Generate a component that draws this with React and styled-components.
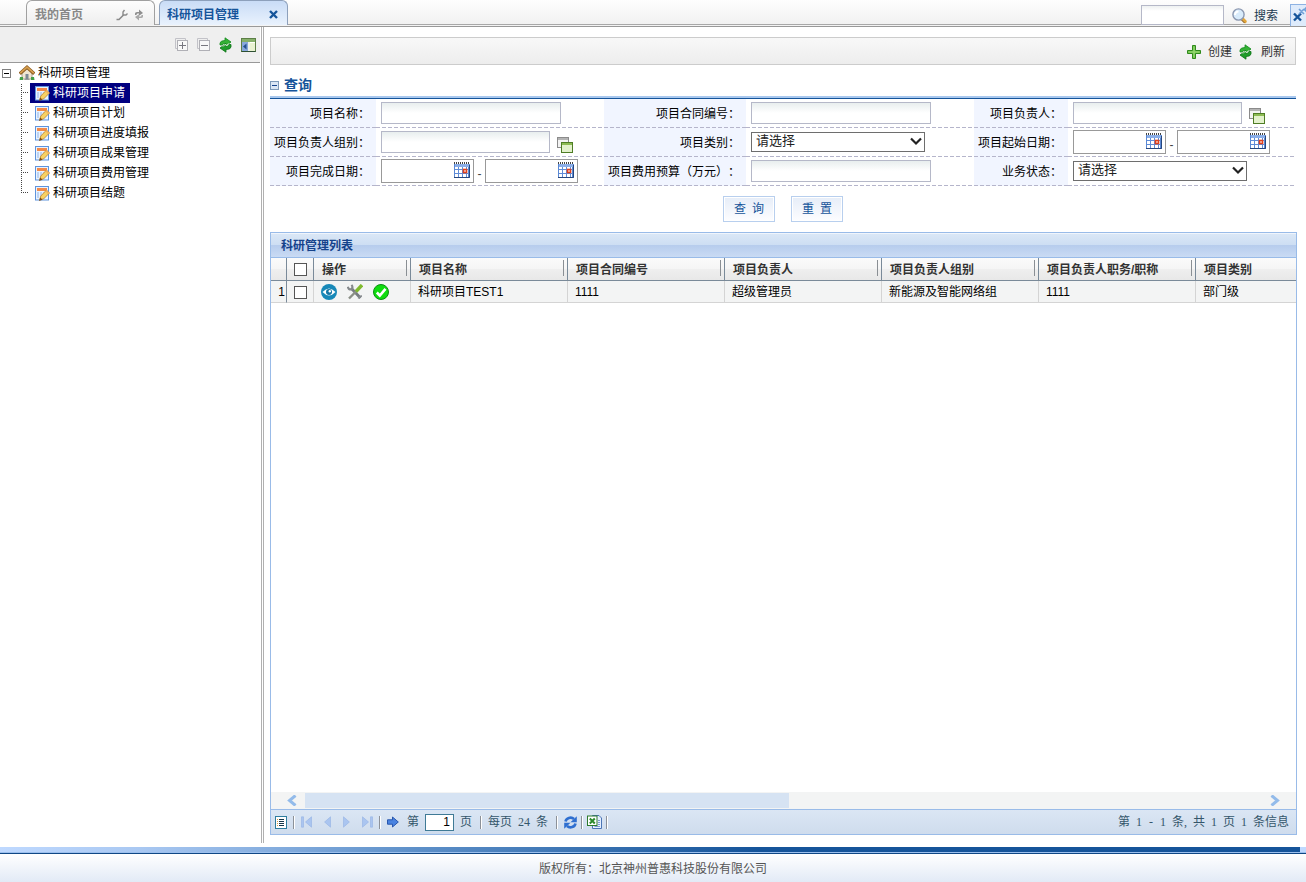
import styled, { createGlobalStyle, css } from 'styled-components';

const SANS = '"Liberation Sans", "Noto Sans CJK SC", sans-serif';
const SERIF = '"Liberation Serif", "Noto Sans CJK SC", serif';

const GlobalStyle = createGlobalStyle`
  * {
    box-sizing: border-box;
  }

  body {
    margin: 0;
    font: 12px/20px ${SANS};
    text-spacing-trim: space-all;
    color: #000;
    background: #fff;
  }

  input,
  select,
  button {
    font: inherit;
    color: inherit;
    margin: 0;
  }

  button {
    display: inline-flex;
    align-items: center;
    padding: 0;
    border: 0;
    background: none;
    cursor: pointer;
  }

  svg {
    display: block;
    flex-shrink: 0;
  }
`;

const Page = styled.div`
  display: flex;
  flex-direction: column;
  height: 100vh;
  overflow: hidden;
`;

/* ---------- top tabs ---------- */

const TopBar = styled.header`
  display: flex;
  align-items: flex-start;
  justify-content: space-between;
  flex-shrink: 0;
  height: 27px;
  padding-left: 26px;
  border-bottom: 1px solid #999;
  background: linear-gradient(#fefefe 0, #f2f2f2 24px, #a8a8a8 24px, #a8a8a8 25px, #f4f4f4 25px);
`;

const Tabs = styled.nav`
  display: flex;
  gap: 4px;
`;

const Tab = styled.div`
  display: flex;
  align-items: center;
  width: 129px;
  height: 25px;
  padding: 3px ${({ $active }) => ($active ? '9px' : '10px')} 0 ${({ $active }) => ($active ? '7px' : '8px')};
  border: 1px solid ${({ $active }) => ($active ? '#8da0bb' : '#a0a0a0')};
  border-bottom: 0;
  border-radius: 6px 6px 0 0;
  color: ${({ $active }) => ($active ? '#15549a' : '#888')};
  background: ${({ $active }) =>
    $active ? 'linear-gradient(#c9dcf6, #e9f2fd)' : 'linear-gradient(#fdfdfd, #eee)'};
`;

const TabLabel = styled.button`
  flex: 1;
  font-weight: bold;
`;

const TabTools = styled.span`
  display: flex;
  align-items: center;
  gap: 6px;
`;

const SearchArea = styled.form`
  display: flex;
  align-items: center;
  padding-top: 3px;
`;

const SearchInput = styled.input`
  width: 83px;
  height: 20px;
  border: 1px solid #b5b8c8;
  background: linear-gradient(#eef1f1, #fff 5px);
`;

const SearchButton = styled.button`
  gap: 7px;
  margin: 3px 12px 0 8px;
  color: #1d3c52;
`;

const CloseAll = styled.button`
  width: 16px;
  height: 22px;
  padding: 0 0 0 2px;
  overflow: hidden;
  border: 1px solid #8db2e3;
  border-width: 1px 0 0 1px;
  background: #deebfb;
`;

/* ---------- body ---------- */

const Body = styled.div`
  display: flex;
  flex: 1;
  min-height: 0;
`;

const Sidebar = styled.aside`
  flex: 0 0 260px;
`;

const SideTools = styled.div`
  display: flex;
  align-items: center;
  justify-content: flex-end;
  gap: 9px;
  height: 36px;
  padding-right: 4px;
  border-bottom: 1px solid #999;
  background: #efefef;
`;

const Splitter = styled.div`
  flex: 0 0 3px;
  margin-left: 1px;
  border: 1px solid #b0b0b0;
  border-width: 0 1px;
`;

const Root = styled.div`
  display: flex;
  align-items: center;
  gap: 3px;
  height: 20px;
  padding-left: 2px;
`;

const Toggle = styled.button`
  margin-right: 5px;
`;

const Children = styled.ul`
  margin: 0 0 0 21px;
  padding: 0;
  list-style: none;
`;

const Child = styled.li`
  position: relative;
  height: 20px;
  padding-left: 9px;

  &::before {
    content: '';
    position: absolute;
    left: 0;
    top: 1px;
    bottom: 0;
    width: 1px;
    background: repeating-linear-gradient(#444 0 1px, transparent 1px 2px);
  }

  &::after {
    content: '';
    position: absolute;
    left: 0;
    top: 9px;
    width: 7px;
    height: 1px;
    background: repeating-linear-gradient(90deg, #444 0 1px, transparent 1px 2px);
  }

  &:last-child::before {
    bottom: 10px;
  }
`;

const Leaf = styled.a`
  display: inline-flex;
  align-items: center;
  gap: 3px;
  height: 20px;
  padding: 0 5px;
  text-decoration: none;
  color: ${({ $selected }) => ($selected ? '#fff' : '#000')};
  background: ${({ $selected }) => ($selected ? '#000080' : 'transparent')};
`;

const Main = styled.main`
  display: flex;
  flex-direction: column;
  flex: 1;
  min-width: 0;
  padding: 10px 9px 8px 6px;
`;

const ActionBar = styled.div`
  display: flex;
  align-items: center;
  justify-content: flex-end;
  gap: 7px;
  flex-shrink: 0;
  height: 28px;
  margin-right: 1px;
  padding: 2px 10px 0 0;
  border: 1px solid #ccc;
  background: linear-gradient(#f8f8f8, #ededed);
`;

const ActionButton = styled.button`
  gap: ${({ $gap }) => $gap};
  color: #333;
`;

/* ---------- query form ---------- */

const QueryHead = styled.h2`
  display: flex;
  align-items: center;
  gap: 5px;
  height: 34px;
  margin: 0 1px 0 0;
  padding-top: 7px;
  border-bottom: 1px solid #15549a;
  box-shadow: inset 0 -2px #a9c8ee;
  font-size: 14px;
  color: #15549a;
`;

const QueryForm = styled.form`
  margin-right: 1px;
`;

const QueryGrid = styled.div`
  display: grid;
  grid-template-columns: 106px 1fr 142px 1fr 94px 1fr;
`;

const dashed = css`
  background-image: repeating-linear-gradient(90deg, #b5b5cb 0 4px, transparent 4px 6px);
  background-size: 100% 1px;
  background-position: bottom;
  background-repeat: no-repeat;
`;

const FieldLabel = styled.label`
  height: 29px;
  padding-right: 6px;
  line-height: 30px;
  text-align: right;
  white-space: nowrap;
  background-color: #f1f5ff;
  ${dashed}
`;

const Field = styled.div`
  display: flex;
  align-items: center;
  height: 29px;
  padding: 0 0 1px 5px;
  ${dashed}
`;

const TextInput = styled.input`
  width: ${({ $picker }) => ($picker ? '169px' : '180px')};
  height: 22px;
  border: 1px solid #b5b8c8;
  background: linear-gradient(#e8eeee, #fff 10px);
`;

const PickButton = styled.button`
  margin: 5px 0 0 7px;
`;

const SelectBox = styled.span`
  position: relative;
  width: 174px;
  height: 20px;

  select {
    appearance: none;
    display: block;
    width: 100%;
    height: 20px;
    padding: 0 20px 2px 4px;
    border: 1px solid #6e6e6e;
    border-radius: 0;
    background: #fff;
    font-size: 13px;
    line-height: 16px;
    color: #222;
  }

  svg {
    position: absolute;
    right: 3px;
    top: 5px;
    pointer-events: none;
  }
`;

const DateBox = styled.span`
  position: relative;
  width: 93px;
  height: 24px;

  input {
    display: block;
    width: 100%;
    height: 100%;
    border: 1px solid #999;
    background: #fff;
  }

  button {
    position: absolute;
    right: 4px;
    top: 3px;
  }
`;

const Dash = styled.span`
  width: 11px;
  padding-top: 6px;
  text-align: center;
  color: #444;
`;

const FormButtons = styled.div`
  display: flex;
  justify-content: center;
  gap: 16px;
  padding: 10px 0;
`;

const FormButton = styled.button`
  justify-content: center;
  gap: 6px;
  width: 52px;
  height: 26px;
  border: 1px solid #b8cfee;
  box-shadow: inset 0 0 0 1px #fff;
  color: #15549a;
  background: linear-gradient(#e6edf8, #fdfdff);
`;

/* ---------- list ---------- */

const Panel = styled.section`
  display: flex;
  flex-direction: column;
  flex: 1;
  min-height: 0;
  border: 1px solid #99bbe8;
`;

const PanelTitle = styled.h3`
  height: 25px;
  margin: 0;
  padding-left: 10px;
  border-top: 1px solid #f0f5fc;
  border-bottom: 1px solid #99bbe8;
  font-size: 12px;
  line-height: 24px;
  color: #15428b;
  background: linear-gradient(#dae7f6 0, #cddef3 11px, #b6cced 11px, #cbdcf4 24px);
`;

const GridBody = styled.div`
  flex: 1;
  min-height: 0;
  overflow: hidden;
`;

const Table = styled.table`
  width: 1082px;
  min-width: 100%;
  table-layout: fixed;
  border-collapse: separate;
  border-spacing: 0;
`;

const Th = styled.th`
  position: relative;
  height: 23px;
  padding: ${({ $tight }) => ($tight ? '0 0 0 7px' : '2px 0 0 8px')};
  border-right: 1px solid #7a8a99;
  border-bottom: 1px solid #7a8a99;
  line-height: 20px;
  text-align: left;
  color: #333;
  background: linear-gradient(#fbfbfb, #f5f5f5 11px, #efefef 11px, #e8e8e8);

  ${({ $sized }) =>
    $sized &&
    css`
      &::after {
        content: '';
        position: absolute;
        right: 3px;
        top: 2px;
        height: 16px;
        border-right: 1px solid #8a8f94;
      }
    `}
`;

const Td = styled.td`
  height: 22px;
  padding: 1px 0 0 7px;
  border-right: 1px solid ${({ $dark }) => ($dark ? '#7a8a99' : '#d4d4d4')};
  border-bottom: 1px solid #d4d4d4;
  line-height: 20px;
  background: #f3f4f4;
`;

const NumberCell = styled(Td)`
  padding: 1px 1px 0 0;
  text-align: right;
`;

const Check = styled.input`
  appearance: none;
  display: block;
  width: 13px;
  height: 13px;
  border: 1px solid #555;
  background: #fff;
`;

const RowActions = styled.div`
  display: flex;
  gap: 10px;
`;

const ScrollTrack = styled.div`
  display: flex;
  align-items: center;
  flex-shrink: 0;
  gap: 1px;
  height: 17px;
  padding: 0 16px;
  background: #f3f4f4;
`;

const ScrollLane = styled.div`
  display: grid;
  grid-template-columns: 51fr 50fr;
  flex: 1;
  margin: 0 5px 0 7px;
`;

const ScrollThumb = styled.div`
  height: 15px;
  background: #d6e3f3;
`;

const Pager = styled.footer`
  display: flex;
  align-items: center;
  flex-shrink: 0;
  gap: 6px;
  height: 25px;
  padding: 0 7px 0 4px;
  border-top: 1px solid #99bbe8;
  font-family: ${SERIF};
  color: #34566b;
  background: linear-gradient(#dbe6f4, #cfdced);
`;

const PagerGroup = styled.div`
  display: flex;
  align-items: center;
  gap: ${({ $gap }) => $gap};
`;

const PagerLine = styled.span`
  width: 2px;
  height: 13px;
  border-left: 1px solid #8c9199;
  border-right: 1px solid #fff;
`;

const PageInput = styled.input`
  width: 29px;
  height: 17px;
  padding: 0 3px;
  border: 1px solid #3f7a96;
  font-family: ${SANS};
  text-align: right;
  color: #000;
  background: #fff;
`;

const PagerSummary = styled(PagerGroup)`
  margin-left: auto;

  span {
    min-width: 6px;
    text-align: center;
  }
`;

/* ---------- bottom ---------- */

const BottomBar = styled.div`
  flex-shrink: 0;
  height: 7px;
  margin-top: 4px;
  border-bottom: 1px solid #0f4785;
  box-shadow: inset 0 -1px #9cc0ee;
  background: linear-gradient(
    90deg,
    #bfd9ff,
    #a9c8f2 140px,
    #5c8fc8 420px,
    #15549a 760px,
    #15549a calc(100% - 6px),
    #bfd9ff calc(100% - 6px)
  );
`;

const Copyright = styled.footer`
  flex-shrink: 0;
  height: 28px;
  line-height: 30px;
  text-align: center;
  color: #555;
  background: linear-gradient(#fff, #e2eaf6);
`;

/* ---------- icons ---------- */

const WrenchIcon = () => (
  <svg width="12" height="12" viewBox="0 0 12 12" fill="none" stroke="#8a8a8a">
    <path d="M.5 10.500H3L7.500 6" strokeWidth="1.600" />
    <path d="M8.500 1 7 3v3h3l1.500-1.500" strokeWidth="1.400" />
  </svg>
);

const SmallRefreshIcon = () => (
  <svg width="10" height="12" viewBox="0 0 10 12" fill="#8f8f8f">
    <path d="M1 6V4.500Q1 3 3 3h2V.5L9 4 5 6.800V4.500H3.500Q2.500 4.500 2.500 6z" />
    <path d="M9 6v1.500Q9 9 7 9H5v2.500L1 8l4-2.800V7.500h1.500Q7.500 7.500 7.500 6z" opacity=".75" />
  </svg>
);

const CloseIcon = () => (
  <svg width="9" height="9" viewBox="0 0 9 9" stroke="#15549a" strokeWidth="2.400">
    <path d="M1 1l7 7M8 1 1 8" />
  </svg>
);

const CloseAllIcon = () => (
  <svg width="14" height="18" viewBox="0 0 14 18" fill="none">
    <path d="M1 7.500l7 7M8 7.500l-7 7" stroke="#15549a" strokeWidth="2.400" />
    <path d="M6 3l5 5M11 3 6 8M11 3l3 3M14 1l-3 3" stroke="#6f9fd8" strokeWidth="1.600" />
  </svg>
);

const SearchIcon = () => (
  <svg width="15" height="16" viewBox="0 0 15 16">
    <path d="M10 10.500 13 13.500" stroke="#e2a63a" strokeWidth="3.400" strokeLinecap="round" />
    <path d="M9.500 12 12.500 15" stroke="#7a5a3a" />
    <circle cx="6.500" cy="6.500" r="5.600" fill="#d8ebfb" stroke="#8a97b0" strokeWidth="1.400" />
    <path d="M3 7a3.500 3.500 0 0 1 3.500-3.500" fill="none" stroke="#fff" strokeWidth="2" />
  </svg>
);

const StackIcon = ({ plus }) => (
  <svg width="13" height="13" viewBox="0 0 13 13" fill="none" stroke="#b0b0b6">
    <path d="M2 10.500H.5V.5h10V2" stroke="#c2c2c8" />
    <rect x="2.500" y="2.500" width="10" height="10" fill="#f8f8f8" />
    <path d={plus ? 'M4 7.500h7M7.500 4v7' : 'M4 7.500h7'} stroke="#77777f" />
  </svg>
);

const RefreshIcon = () => (
  <svg width="13" height="16" viewBox="0 0 13 16">
    <path d="M1 8V6Q1.500 3.500 6 3.500V.8L12 5 6 9.500V6.500Q4 6.500 3 8z" fill="#35b135" stroke="#128a1c" strokeWidth=".8" />
    <path d="M12 7.500v2.500Q11.500 12.500 7 12.500v2.700L1 11 7 6.500v3Q9 9.500 10 7.500z" fill="#1f9c2a" stroke="#0c7215" strokeWidth=".8" />
    <path d="M4 9.500 6.500 7l1 2L9.500 6.500" fill="none" stroke="#d7f0d4" />
  </svg>
);

const CollapseIcon = () => (
  <svg width="15" height="14" viewBox="0 0 15 14">
    <rect x=".5" y=".5" width="14" height="13" fill="#fff" stroke="#5c7f46" />
    <path d="M1 1h13v3H1z" fill="#86b06a" />
    <path d="M1 4h6v9H1z" fill="#88a8dc" />
    <path d="M7 4h2v9H7z" fill="#eef3e8" />
    <path d="M9 5h5v8H9z" fill="#e9f2d2" />
    <path d="M5.500 5.500v6L2 8.500z" fill="#24508f" />
    <path d="M.5 13.500h14" stroke="#2d4f33" />
  </svg>
);

const MinusBox = ({ blue }) => (
  <svg width="9" height="9" viewBox="0 0 9 9" fill="none">
    <rect x=".5" y=".5" width="8" height="8" fill={blue ? '#dbe6f4' : '#fff'} stroke={blue ? '#7f9ab8' : '#808080'} />
    <path d="M2 4.500h5" stroke={blue ? '#15428b' : '#000'} />
  </svg>
);

const HomeIcon = () => (
  <svg width="16" height="16" viewBox="0 0 16 16">
    <path d="M3 7.500 8 3l5 4.500V14H3z" fill="#f0e6d2" stroke="#9a8f7d" strokeWidth=".8" />
    <path d="M6.500 9h3v5h-3z" fill="#7c8894" />
    <path d="M.8 8.800 8 2.200 15.200 8.800" fill="none" stroke="#8a5a20" strokeWidth="3.200" />
    <path d="M1.200 8.200 8 2.100 14.800 8.200" fill="none" stroke="#d9a150" strokeWidth="1.600" />
    <path d="M1 12h3v3H.5zM12 12h3l.5 3H12z" fill="#43a047" />
    <path d="M5.500 14.500h5" stroke="#999" />
  </svg>
);

const NoteIcon = () => (
  <svg width="15" height="15" viewBox="0 0 15 15">
    <rect x=".5" y=".5" width="13" height="13.500" fill="#eaf3fe" stroke="#5f93dc" />
    <path d="M2 2h10v3H2z" fill="#f28a4a" />
    <path d="M2 7h10M2 9h8M2 11h6" stroke="#8fb3e8" strokeWidth="1.200" strokeDasharray="2 1" />
    <path d="M4.800 13.500 5.800 10 11.500 4 14.500 7 8.500 13z" fill="#f8d262" stroke="#b9812b" strokeWidth=".8" />
    <path d="M11.500 4 14.500 7 13.300 8.200 10.300 5.200z" fill="#f0b060" />
    <path d="M4 15 5.200 11.500 7.500 13.800z" fill="#7c4a12" />
  </svg>
);

const PlusIcon = () => (
  <svg width="14" height="14" viewBox="0 0 14 14">
    <path d="M5.500 .5h3v5h5v3h-5v5h-3v-5h-5v-3h5z" fill="#6cc04a" stroke="#2f8a1c" />
    <path d="M7 1.500v11M1.500 7h11" stroke="#9ddb76" />
  </svg>
);

const WindowsIcon = () => (
  <svg width="16" height="16" viewBox="0 0 16 16">
    <rect x=".5" y=".5" width="11" height="10" fill="#f3f3f3" stroke="#8b8b8b" />
    <path d="M1 1h10v2H1z" fill="#b4b4b4" />
    <rect x="4.500" y="5.500" width="11" height="10" fill="#e3f1cc" stroke="#4f7d25" />
    <path d="M5 6h10v2H5z" fill="#8dbb54" />
  </svg>
);

const CalendarIcon = () => (
  <svg width="16" height="16" viewBox="0 0 16 16">
    <path d="M0 2h16v14H0z" fill="#5a88d4" />
    <path d="M1 2h14v3H1z" fill="#8aaee8" />
    <path d="M0 1h16" stroke="#444" strokeWidth="2" strokeDasharray="1 1" />
    <path d="M1 5h13v10H1z" fill="#fff" />
    <path d="M1 7.500h13M1 11.500h13M4.500 5v10M8.500 5v10M12.500 5v10" stroke="#5f8cd8" />
    <rect x="9.500" y="7.500" width="3" height="3" fill="#fff" stroke="#e0401c" strokeWidth="1.600" />
    <path d="M0 15.500h15.500V3" fill="none" stroke="#27477e" />
  </svg>
);

const ChevronIcon = () => (
  <svg width="12" height="9" viewBox="0 0 12 9" fill="none" stroke="#222" strokeWidth="2.200">
    <path d="M1 1.500l5 5 5-5" />
  </svg>
);

const EyeIcon = () => (
  <svg width="16" height="16" viewBox="0 0 16 16">
    <circle cx="8" cy="8" r="8" fill="#1788b8" />
    <path d="M1.500 8Q8 .8 14.500 8 8 15 1.500 8z" fill="#fff" />
    <circle cx="8" cy="8" r="3" fill="#1576a5" />
    <circle cx="8.800" cy="7.200" r="1.200" fill="#fff" />
  </svg>
);

const ToolsIcon = () => (
  <svg width="16" height="16" viewBox="0 0 16 16" fill="none">
    <path d="M4 4 13.500 14" stroke="#777c80" strokeWidth="2.800" />
    <path d="M.8 2.800Q1.500 6 4.500 5.500 6.500 3.500 4.500.8" stroke="#85898c" strokeWidth="2" />
    <path d="M2 14.500 10 6.500" stroke="#8a8f86" strokeWidth="2.400" />
    <path d="M15 1 9 7.500" stroke="#7fba2e" strokeWidth="3.400" />
    <path d="M11.500 14.500Q12 12 15 12" stroke="#85898c" strokeWidth="1.600" />
  </svg>
);

const OkIcon = () => (
  <svg width="16" height="16" viewBox="0 0 16 16">
    <circle cx="8" cy="8" r="7.500" fill="#0fdc0f" stroke="#0a8f12" />
    <path d="M3.800 8.500 6.800 11.500 12.500 4.800" fill="none" stroke="#fff" strokeWidth="2.600" />
  </svg>
);

const ScrollArrow = ({ right }) => (
  <svg width="10" height="11" viewBox="0 0 10 11" fill="none" stroke="#93bbea" strokeWidth="3">
    <path d={right ? 'M1.500 .5l6 5-6 5' : 'M8.500 .5l-6 5 6 5'} />
  </svg>
);

const ListIcon = () => (
  <svg width="12" height="13" viewBox="0 0 12 13">
    <rect x=".5" y=".5" width="11" height="12" fill="#fff" stroke="#2f7d9f" />
    <path d="M4 3.500h5M4 5.500h5M4 7.500h5M4 9.500h5" stroke="#17364a" />
    <path d="M2.500 3v7" stroke="#e09b3c" strokeDasharray="1 1" />
  </svg>
);

const PageIcon = ({ kind }) => {
  const wide = kind === 'first' || kind === 'last';
  const flip = kind === 'next' || kind === 'last';
  const width = wide ? 11 : 7;
  return (
    <svg width={width} height="12" viewBox={`0 0 ${width} 12`} fill="#aac5f0" stroke="#93b2e4" strokeWidth=".6">
      <g transform={flip ? `translate(${width} 0) scale(-1 1)` : undefined}>
        {wide && <path d="M.5.8h2v10.400h-2z" />}
        <path d={wide ? 'M10.500 .8v10.400L4.500 6z' : 'M6.500 .8v10.400L.6 6z'} />
      </g>
    </svg>
  );
};

const GoIcon = () => (
  <svg width="12" height="12" viewBox="0 0 12 12">
    <path d="M.5 3.800h5V1L11.300 6 5.500 11V8.200h-5z" fill="#4a83e0" stroke="#2857ae" />
  </svg>
);

const SyncIcon = () => (
  <svg width="13" height="13" viewBox="0 0 13 13" fill="none" stroke="#2f6fd0" strokeWidth="2.600">
    <path d="M1.500 5.500A5 4.500 0 0 1 10 3M11.500 7.500A5 4.500 0 0 1 3 10" />
    <path d="M12.800.3v6H6.500zM.2 12.700v-6h6.300z" fill="#2f6fd0" stroke="none" />
  </svg>
);

const ExcelIcon = () => (
  <svg width="15" height="14" viewBox="0 0 15 14">
    <path d="M5.500 .5h6.500l2.500 2.500v10.500h-9z" fill="#e5efff" stroke="#4c75b5" />
    <path d="M11 5.500h2M11 7.500h2M11 9.500h2M7.500 11.500h5.500" stroke="#7c9cd0" />
    <rect x=".5" y="1" width="9.500" height="9.500" fill="#fff" stroke="#2c7a2c" />
    <path d="M2.800 3.500l5 5M7.800 3.500l-5 5" stroke="#2d8b2d" strokeWidth="2" />
  </svg>
);

/* ---------- data ---------- */

const MENU = [
  '科研项目申请',
  '科研项目计划',
  '科研项目进度填报',
  '科研项目成果管理',
  '科研项目费用管理',
  '科研项目结题',
];

const FIELDS = [
  { id: 'name', label: '项目名称', type: 'text' },
  { id: 'contract', label: '项目合同编号', type: 'text' },
  { id: 'owner', label: '项目负责人', type: 'picker' },
  { id: 'group', label: '项目负责人组别', type: 'picker' },
  { id: 'category', label: '项目类别', type: 'select' },
  { id: 'start', label: '项目起始日期', type: 'dates' },
  { id: 'finish', label: '项目完成日期', type: 'dates' },
  { id: 'budget', label: '项目费用预算（万元）', type: 'text' },
  { id: 'status', label: '业务状态', type: 'select' },
];

const COLUMNS = ['项目名称', '项目合同编号', '项目负责人', '项目负责人组别', '项目负责人职务/职称', '项目类别'];

const ROWS = [['科研项目TEST1', '1111', '超级管理员', '新能源及智能网络组', '1111', '部门级']];

const SUMMARY = ['第', '1', '-', '1', '条,', '共', '1', '页', '1', '条信息'];

function FieldControl({ id, type }) {
  if (type === 'select') {
    return (
      <SelectBox>
        <select id={id}>
          <option>请选择</option>
        </select>
        <ChevronIcon />
      </SelectBox>
    );
  }
  if (type === 'dates') {
    return (
      <>
        <DateBox>
          <input id={id} type="text" />
          <button type="button" aria-label="选择日期"><CalendarIcon /></button>
        </DateBox>
        <Dash>-</Dash>
        <DateBox>
          <input type="text" aria-label="截止日期" />
          <button type="button" aria-label="选择日期"><CalendarIcon /></button>
        </DateBox>
      </>
    );
  }
  return (
    <>
      <TextInput id={id} type="text" $picker={type === 'picker'} />
      {type === 'picker' && (
        <PickButton type="button" aria-label="选择"><WindowsIcon /></PickButton>
      )}
    </>
  );
}

function SideTree() {
  return (
    <Sidebar>
      <SideTools>
        <button type="button" aria-label="展开"><StackIcon plus /></button>
        <button type="button" aria-label="折叠"><StackIcon /></button>
        <button type="button" aria-label="刷新"><RefreshIcon /></button>
        <button type="button" aria-label="隐藏"><CollapseIcon /></button>
      </SideTools>
      <Root>
        <Toggle type="button" aria-label="折叠"><MinusBox /></Toggle>
        <HomeIcon />
        <span>科研项目管理</span>
      </Root>
      <Children>
        {MENU.map((item, i) => (
          <Child key={item}>
            <Leaf href="#" $selected={i === 0}>
              <NoteIcon />
              {item}
            </Leaf>
          </Child>
        ))}
      </Children>
    </Sidebar>
  );
}

function ProjectList() {
  return (
    <Panel>
      <PanelTitle>科研管理列表</PanelTitle>
      <GridBody>
        <Table>
          <colgroup>
            <col width="16" />
            <col width="27" />
            <col width="97" />
            {COLUMNS.map((c) => <col key={c} width="157" />)}
          </colgroup>
          <thead>
            <tr>
              <Th />
              <Th $tight><Check type="checkbox" aria-label="全选" /></Th>
              <Th $sized>操作</Th>
              {COLUMNS.map((c) => <Th key={c} $sized>{c}</Th>)}
            </tr>
          </thead>
          <tbody>
            {ROWS.map((row, i) => (
              <tr key={row[0]}>
                <NumberCell $dark>{i + 1}</NumberCell>
                <Td><Check type="checkbox" aria-label="选择行" /></Td>
                <Td>
                  <RowActions>
                    <button type="button" aria-label="查看"><EyeIcon /></button>
                    <button type="button" aria-label="编辑"><ToolsIcon /></button>
                    <button type="button" aria-label="提交"><OkIcon /></button>
                  </RowActions>
                </Td>
                {row.map((cell, j) => <Td key={COLUMNS[j]}>{cell}</Td>)}
              </tr>
            ))}
          </tbody>
        </Table>
      </GridBody>
      <ScrollTrack>
        <ScrollArrow />
        <ScrollLane><ScrollThumb /></ScrollLane>
        <ScrollArrow right />
      </ScrollTrack>
      <Pager>
        <button type="button" aria-label="列"><ListIcon /></button>
        <PagerLine />
        <PagerGroup $gap="12px">
          <button type="button" aria-label="首页"><PageIcon kind="first" /></button>
          <button type="button" aria-label="上一页"><PageIcon kind="prev" /></button>
          <button type="button" aria-label="下一页"><PageIcon kind="next" /></button>
          <button type="button" aria-label="末页"><PageIcon kind="last" /></button>
        </PagerGroup>
        <PagerLine />
        <PagerGroup $gap="8px">
          <button type="button" aria-label="转到"><GoIcon /></button>
          <label htmlFor="page">第</label>
        </PagerGroup>
        <PageInput id="page" type="text" defaultValue="1" />
        <PagerGroup $gap="8px">
          <span>页</span>
          <PagerLine />
        </PagerGroup>
        <PagerGroup $gap="8px">
          <PagerGroup $gap="6px">
            <span>每页</span>
            <span>24</span>
            <span>条</span>
          </PagerGroup>
          <PagerLine />
        </PagerGroup>
        <PagerGroup $gap="4px">
          <button type="button" aria-label="刷新"><SyncIcon /></button>
          <PagerLine />
          <button type="button" aria-label="导出"><ExcelIcon /></button>
          <PagerLine />
        </PagerGroup>
        <PagerSummary $gap="6px">
          {SUMMARY.map((part, i) => <span key={i}>{part}</span>)}
        </PagerSummary>
      </Pager>
    </Panel>
  );
}

export default function App() {
  return (
    <Page>
      <GlobalStyle />
      <TopBar>
        <Tabs>
          <Tab>
            <TabLabel type="button">我的首页</TabLabel>
            <TabTools>
              <WrenchIcon />
              <SmallRefreshIcon />
            </TabTools>
          </Tab>
          <Tab $active>
            <TabLabel type="button">科研项目管理</TabLabel>
            <button type="button" aria-label="关闭"><CloseIcon /></button>
          </Tab>
        </Tabs>
        <SearchArea onSubmit={(e) => e.preventDefault()}>
          <SearchInput type="text" aria-label="搜索" />
          <SearchButton type="submit">
            <SearchIcon />
            搜索
          </SearchButton>
          <CloseAll type="button" aria-label="关闭全部"><CloseAllIcon /></CloseAll>
        </SearchArea>
      </TopBar>
      <Body>
        <SideTree />
        <Splitter />
        <Main>
          <ActionBar>
            <ActionButton type="button" $gap="7px"><PlusIcon />创建</ActionButton>
            <ActionButton type="button" $gap="9px"><RefreshIcon />刷新</ActionButton>
          </ActionBar>
          <QueryHead>
            <MinusBox blue />
            查询
          </QueryHead>
          <QueryForm onSubmit={(e) => e.preventDefault()}>
            <QueryGrid>
              {FIELDS.map(({ id, label, type }) => [
                <FieldLabel key={`${id}-label`} htmlFor={id}>{label}：</FieldLabel>,
                <Field key={id}><FieldControl id={id} type={type} /></Field>,
              ])}
            </QueryGrid>
            <FormButtons>
              <FormButton type="submit"><span>查</span><span>询</span></FormButton>
              <FormButton type="reset"><span>重</span><span>置</span></FormButton>
            </FormButtons>
          </QueryForm>
          <ProjectList />
        </Main>
      </Body>
      <BottomBar />
      <Copyright>版权所有：北京神州普惠科技股份有限公司</Copyright>
    </Page>
  );
}
